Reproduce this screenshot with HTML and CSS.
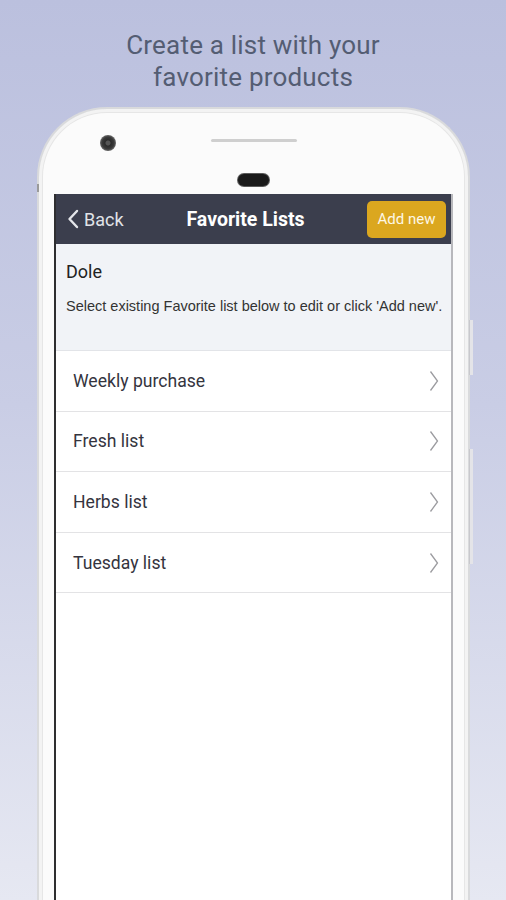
FILE: index.html
```html
<!DOCTYPE html>
<html>
<head>
<meta charset="utf-8">
<link rel="stylesheet" href="styles.css">
</head>
<body>
<div class="page">
  <h1 class="headline">Create a list with your<br>favorite products</h1>
  <div class="phone">
    <div class="bezel">
      <span class="camera"></span>
      <span class="speaker"></span>
      <span class="sensor"></span>
    </div>
    <span class="btn-side btn-side-a"></span>
    <span class="btn-side btn-side-b"></span>
    <span class="btn-left"></span>
    <div class="screen">
      <div class="navbar">
        <div class="back">
          <svg class="back-icon" width="12" height="20" viewBox="0 0 12 20"><path d="M10 2 L2.5 10 L10 18" fill="none" stroke="#e4e6ea" stroke-width="2.4" stroke-linecap="round" stroke-linejoin="round"/></svg>
          <span>Back</span>
        </div>
        <div class="title">Favorite Lists</div>
        <div class="add-btn">Add new</div>
      </div>
      <div class="intro">
        <div class="store">Dole</div>
        <div class="hint">Select existing Favorite list below to edit or click 'Add new'.</div>
      </div>
      <ul class="lists">
        <li class="row"><span>Weekly purchase</span><svg class="chev" width="10" height="22" viewBox="0 0 10 22"><path d="M1.5 1.5 L8.5 11 L1.5 20.5" fill="none" stroke="#9c9ca0" stroke-width="1.3"/></svg></li>
        <li class="row"><span>Fresh list</span><svg class="chev" width="10" height="22" viewBox="0 0 10 22"><path d="M1.5 1.5 L8.5 11 L1.5 20.5" fill="none" stroke="#9c9ca0" stroke-width="1.3"/></svg></li>
        <li class="row"><span>Herbs list</span><svg class="chev" width="10" height="22" viewBox="0 0 10 22"><path d="M1.5 1.5 L8.5 11 L1.5 20.5" fill="none" stroke="#9c9ca0" stroke-width="1.3"/></svg></li>
        <li class="row"><span>Tuesday list</span><svg class="chev" width="10" height="22" viewBox="0 0 10 22"><path d="M1.5 1.5 L8.5 11 L1.5 20.5" fill="none" stroke="#9c9ca0" stroke-width="1.3"/></svg></li>
      </ul>
    </div>
  </div>
</div>
</body>
</html>
```

FILE: styles.css
```css
html, body {
  margin: 0;
  padding: 0;
  height: 100%;
  overflow: hidden;
}
body {
  background: linear-gradient(180deg, #bbc0de 0%, #c9cde5 45%, #e6e8f2 100%);
  font-family: Roboto, "Liberation Sans", Arial, sans-serif;
}
.page {
  width: 506px;
  height: 900px;
  display: flex;
  flex-direction: column;
  align-items: center;
  overflow: hidden;
}
.headline {
  margin: 29px 0 0 0;
  font-weight: 400;
  font-size: 26px;
  line-height: 32px;
  color: #545d73;
  text-align: center;
  letter-spacing: 0.2px;
}
.phone {
  position: relative;
  margin-top: 14px;
  margin-left: 1px;
  width: 433px;
  height: 900px;
  box-sizing: border-box;
  background: #fbfbfb;
  border: 2px solid #d9dadc;
  border-bottom: none;
  border-radius: 70px 70px 0 0;
  box-shadow: inset 0 0 0 3px #f3f3f3, inset 0 0 0 4px #e6e6e6;
  padding: 0 15px;
}
.bezel {
  position: relative;
  height: 85px;
  display: flex;
  flex-direction: column;
  align-items: center;
}
.camera {
  position: absolute;
  left: 46px;
  top: 26px;
  width: 16px;
  height: 16px;
  border-radius: 50%;
  background: radial-gradient(circle at 50% 50%, #555 0 2px, #2b2b2b 3px, #3a3a3a 6px, #6a6a6a 8px);
}
.speaker {
  margin-top: 30px;
  width: 86px;
  height: 3px;
  border-radius: 2px;
  background: #cfcfcf;
}
.sensor {
  margin-top: 32px;
  width: 31px;
  height: 12px;
  border-radius: 6px;
  background: #1a1a1a;
  box-shadow: 0 0 0 1px #5a5a5a;
}
.btn-side {
  position: absolute;
  right: -5px;
  width: 3px;
  background: #e4e4e8;
  border-left: 1px solid #c8c8cc;
}
.btn-side-a { top: 211px; height: 55px; }
.btn-side-b { top: 340px; height: 115px; }
.btn-left {
  position: absolute;
  left: -2px;
  top: 75px;
  width: 2px;
  height: 8px;
  background: #9a9a9a;
}
.screen {
  height: 900px;
  background: #ffffff;
  border-left: 2px solid #2e2e30;
  border-right: 2px solid #b8b8bc;
}
.navbar {
  height: 50px;
  background: #3b3e4d;
  display: grid;
  grid-template-columns: 110px 1fr 90px;
  align-items: center;
}
.back {
  display: flex;
  align-items: center;
  padding-left: 11px;
  color: #e1e3e8;
  font-size: 18px;
  gap: 5px;
}
.back-icon {
  display: block;
}
.title {
  text-align: center;
  color: #ffffff;
  font-weight: 700;
  font-size: 19.5px;
  margin-left: -36px;
}
.add-btn {
  justify-self: end;
  margin-right: 5px;
  width: 79px;
  height: 37px;
  box-sizing: border-box;
  border-radius: 5px;
  background: #dba71f;
  color: #fdf7e6;
  font-size: 15px;
  display: flex;
  align-items: center;
  justify-content: center;
}
.intro {
  height: 107px;
  box-sizing: border-box;
  background: #f1f3f7;
  padding: 17px 10px 0 10px;
  border-bottom: 1px solid #e2e4e8;
}
.store {
  font-size: 18px;
  line-height: 22px;
  color: #222;
}
.hint {
  margin-top: 15px;
  font-family: "Liberation Sans", Arial, sans-serif;
  font-size: 14.5px;
  line-height: 16px;
  color: #333;
  white-space: nowrap;
}
.lists {
  list-style: none;
  margin: 0;
  padding: 0;
}
.row {
  height: 60.6px;
  box-sizing: border-box;
  border-bottom: 1px solid #e3e3e5;
  display: flex;
  align-items: center;
  justify-content: space-between;
  padding: 0 12px 0 17px;
  font-size: 17.6px;
  color: #34343e;
}
.chev {
  display: block;
}
```
